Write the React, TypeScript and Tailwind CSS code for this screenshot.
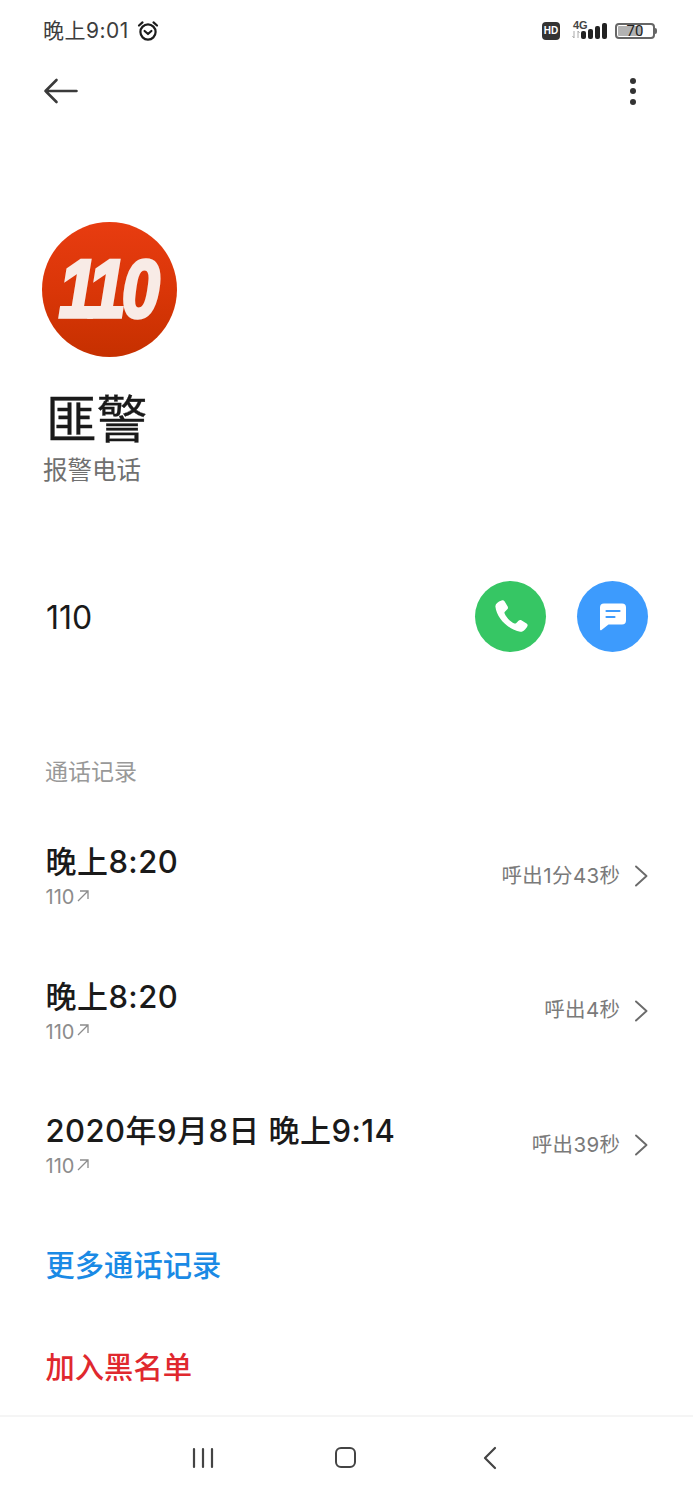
const fontStack = "font-['Inter','Noto_Sans_CJK_SC',sans-serif]";

function Alarm() {
  return (
    <svg width="22" height="22" viewBox="0 0 22 22" fill="none" stroke="#1c1c1c" strokeWidth="2.200" strokeLinecap="round" strokeLinejoin="round">
      <circle cx="11" cy="12" r="7.6" />
      <path d="M7.6 11l3.4 3 3.4-3" />
      <path d="M2 5.500L5.500 2.400M20 5.500l-3.500-3.100" />
    </svg>
  );
}

function StatusIcons() {
  return (
    <div className="flex items-center">
      <div className="flex h-[18px] w-[18px] items-center justify-center rounded-[4px] bg-[#333] font-['Liberation_Sans',sans-serif] text-[10px] font-bold text-white">HD</div>
      <div className="ml-[11px] flex h-[20px] w-[36px] flex-col">
        <div className="h-[9px] pl-[2px] font-['Liberation_Sans',sans-serif] text-[11px] leading-[9px] font-bold text-[#444]">4G</div>
        <svg width="36" height="16" viewBox="0 0 36 16" className="-mt-[7px]">
          <path d="M3 8v7M1.500 13l1.500 2M7 15V8M7 8l1.500 2" stroke="#aaa" strokeWidth="1" fill="none" />
          <rect x="10" y="8" width="5" height="8" rx="2" fill="#222" />
          <rect x="17" y="6" width="5" height="10" rx="2" fill="#222" />
          <rect x="24" y="3" width="5" height="13" rx="2" fill="#222" />
          <rect x="31" y="0" width="5" height="16" rx="2" fill="#222" />
        </svg>
      </div>
      <div className="relative ml-[8px] flex h-[16px] w-[40px] items-center rounded-[4px] border-2 border-[#666] p-[1px]">
        <div className="h-full w-[70%] rounded-[1px] bg-[#b2b2b2]" />
        <span className="absolute inset-0 flex items-center justify-center pt-[2px] font-['Roboto',sans-serif] text-[15px] leading-none text-[#222]">70</span>
      </div>
      <div className="h-[6px] w-[2px] rounded-r-[2px] bg-[#666]" />
    </div>
  );
}

function Avatar() {
  return (
    <div className="ml-[42px] flex h-[135px] w-[135px] items-center justify-center overflow-hidden rounded-full bg-gradient-to-b from-[#e83c10] via-[#da3608] to-[#c63000]">
      <span className="block scale-x-[1.14] scale-y-[1.36] pr-[4px] font-['Liberation_Sans',sans-serif] text-[60px] leading-none font-bold tracking-[-3.500px] text-[#f8ebe6] italic [-webkit-text-stroke:2.500px_#f8ebe6]">110</span>
    </div>
  );
}

function Chevron() {
  return (
    <svg width="16" height="24" viewBox="0 0 16 24" fill="none" stroke="#6b6b6b" strokeWidth="1.900" strokeLinecap="round" strokeLinejoin="round">
      <path d="M3 2.500L13.500 12 3 21.500" />
    </svg>
  );
}

function OutArrow() {
  return (
    <svg width="14" height="14" viewBox="0 0 14 14" fill="none" stroke="#8c8c8c" strokeWidth="1.300" className="mb-[3px] ml-[2px]">
      <path d="M2 12L12 2M4 2h8v8" />
    </svg>
  );
}

function CallRow({ time, detail }: { time: string; detail: string }) {
  return (
    <div className="flex h-[134.5px] items-start justify-between pr-[44px] pl-[45.500px]">
      <div>
        <div className="h-[40px] text-[31px] leading-[40px] font-medium tracking-[0.450px] text-[#1a1a1a]">{time}</div>
        <div className="mt-[3px] flex h-[24px] items-center text-[20px] leading-[24px] text-[#8c8c8c]">
          110
          <OutArrow />
        </div>
      </div>
      <div className="mt-[19px] flex h-[30px] items-center gap-[12.500px] text-[20.500px] tracking-[0.400px] text-[#7a7a7a]">
        <span>{detail}</span>
        <Chevron />
      </div>
    </div>
  );
}

export default function App() {
  const calls = [
    { time: "晚上8:20", detail: "呼出1分43秒" },
    { time: "晚上8:20", detail: "呼出4秒" },
    { time: "2020年9月8日 晚上9:14", detail: "呼出39秒" },
  ];

  return (
    <div className={`flex h-[1500px] w-[693px] flex-col overflow-hidden bg-white ${fontStack}`}>
      <div className="flex h-[61px] items-center justify-between pr-[36px] pl-[43px]">
        <div className="flex items-center gap-[8px] text-[21px] tracking-[0.500px] text-[#3d3d3d]">
          <span>晚上9:01</span>
          <Alarm />
        </div>
        <StatusIcons />
      </div>

      <div className="flex h-[60px] items-center justify-between pr-[57px] pl-[43px]">
        <svg width="36" height="28" viewBox="0 0 36 28" fill="none" stroke="#3a3a3a" strokeWidth="2.600" strokeLinecap="round" strokeLinejoin="round">
          <path d="M2.500 14h31M13.500 3L2.500 14l11 11" />
        </svg>
        <div className="flex flex-col gap-[4.500px]">
          <div className="h-[6px] w-[6px] rounded-full bg-[#333]" />
          <div className="h-[6px] w-[6px] rounded-full bg-[#333]" />
          <div className="h-[6px] w-[6px] rounded-full bg-[#333]" />
        </div>
      </div>

      <div className="mt-[101px]">
        <Avatar />
      </div>

      <div className="mt-[33px] h-[60px] pl-[45.500px] text-[51px] leading-[60px] text-[#1a1a1a] [-webkit-text-stroke:0.300px_#1a1a1a]">匪警</div>
      <div className="mt-[4px] h-[32px] pl-[43px] text-[24.500px] leading-[32px] text-[#707070]">报警电话</div>

      <div className="mt-[95px] flex h-[71px] items-center justify-between pr-[45px] pl-[46px]">
        <span className="pt-[2px] text-[32px] text-[#1a1a1a]">110</span>
        <div className="flex gap-[31px]">
          <div className="flex h-[71px] w-[71px] items-center justify-center rounded-full bg-[#36c664]">
            <svg width="42" height="42" viewBox="0 0 24 24" fill="#fff">
              <path d="M6.600 2.600c.6-.4 1.300-.2 1.700.4l1.800 3c.3.500.2 1.200-.2 1.600L8.500 9c-.3.300-.3.600-.2.900.9 2.300 3.300 4.800 5.700 5.800.3.100.6.100.9-.2l1.400-1.400c.4-.4 1.100-.5 1.600-.2l3 1.800c.6.400.8 1.100.4 1.700-.9 1.500-2.200 3.200-4 3-6.500-.8-13.500-7.800-14.200-14.300-.2-1.500 1.300-2.700 3.500-3.500z" />
            </svg>
          </div>
          <div className="flex h-[71px] w-[71px] items-center justify-center rounded-full bg-[#3d9bfd]">
            <svg width="30" height="30" viewBox="0 0 30 30">
              <path d="M6 1.500h18a4 4 0 0 1 4 4v13a4 4 0 0 1-4 4H10.500L3.500 28c-.7.500-1.500 0-1.500-.8V5.500a4 4 0 0 1 4-4z" fill="#fff" />
              <path d="M8.500 9h13M8.500 15h8" stroke="#3d9bfd" strokeWidth="2.200" strokeLinecap="round" />
            </svg>
          </div>
        </div>
      </div>

      <div className="mt-[104px] h-[32px] pl-[45px] text-[23px] leading-[32px] text-[#999]">通话记录</div>

      <div className="mt-[54px]">
        {calls.map((call, i) => (
          <CallRow key={i} time={call.time} detail={call.detail} />
        ))}
      </div>

      <div className="h-[40px] pl-[45.500px] text-[29.300px] leading-[40px] font-medium text-[#1a8ae5]">更多通话记录</div>
      <div className="mt-[62px] h-[40px] pl-[45.500px] text-[29.300px] leading-[40px] font-medium text-[#e0282e]">加入黑名单</div>

      <div className="mt-[27px] flex h-[84px] items-center gap-[121px] border-t-2 border-[#f5f5f5] pl-[192px]">
        <svg width="22" height="22" viewBox="0 0 22 22" stroke="#444" strokeWidth="2.200" strokeLinecap="round">
          <path d="M2 2v18M11 2v18M20 2v18" />
        </svg>
        <div className="mr-[4px] h-[21px] w-[21px] rounded-[6px] border-[2.500px] border-[#444]" />
        <svg width="16" height="24" viewBox="0 0 16 24" fill="none" stroke="#444" strokeWidth="2.200" strokeLinecap="round" strokeLinejoin="round">
          <path d="M14 2L4 12l10 10" />
        </svg>
      </div>
    </div>
  );
}
